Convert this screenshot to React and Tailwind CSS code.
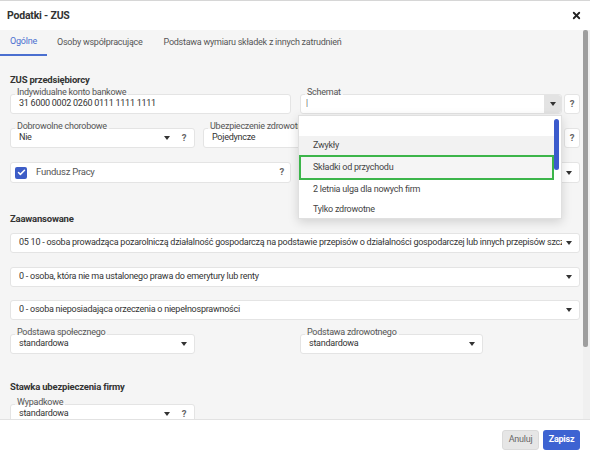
import { X, Check } from 'lucide-react'

function Arrow({ className = '' }) {
  return <span className={`inline-block shrink-0 w-0 h-0 border-l-[3px] border-r-[3px] border-t-[4px] border-l-transparent border-r-transparent border-t-[#333] ${className}`} />
}

function Label({ children }) {
  return (
    <span className="absolute left-[4px] -top-[9px] px-[2px] whitespace-nowrap text-[9px] leading-[12px] text-[#555] bg-[linear-gradient(to_bottom,#f5f5f5_75%,#ffffff_75%)]">
      {children}
    </span>
  )
}

function Box({ label, children, className = '' }) {
  return (
    <div className={`relative h-[20px] bg-white border border-[#e4e4e4] rounded-[3px] flex items-center ${className}`}>
      {label && <Label>{label}</Label>}
      {children}
    </div>
  )
}

function Help({ className = '' }) {
  return <span className={`text-[9.5px] text-[#666] font-bold ${className}`}>?</span>
}

function Select({ label, value, help, className = '' }) {
  return (
    <Box label={label} className={className}>
      <span className="flex-1 min-w-0 pl-[8px] overflow-hidden whitespace-nowrap">{value}</span>
      <Arrow className="ml-[4px] mr-[7px]" />
      {help && <Help className="w-[14px] mr-[3px] text-center" />}
    </Box>
  )
}

export default function App() {
  return (
    <div className="relative w-[590px] h-[460px] bg-white flex flex-col overflow-hidden border-t border-[#d6d6d6] font-['Roboto',sans-serif] text-[9px] tracking-[-0.25px] text-[#333]">
      {/* Header */}
      <header className="h-[29px] flex items-center justify-between pl-[7px] pr-[8px]">
        <h1 className="text-[10.5px] tracking-[-0.2px] font-bold text-[#333]">Podatki - ZUS</h1>
        <X size={11} strokeWidth={4} className="text-[#222]" />
      </header>

      <div className="flex-1 min-h-0 flex bg-[#f5f5f5]">
        <div className="flex-1 min-w-0 overflow-hidden">
          {/* Tabs */}
          <nav className="h-[26px] flex text-[#555]">
            <div className="w-[47px] flex items-center justify-center text-[#4a6fd0] border-b-2 border-[#4a6fd0]">Ogólne</div>
            <div className="pl-[10px] pr-[11px] flex items-center">Osoby współpracujące</div>
            <div className="px-[10px] flex items-center">Podstawa wymiaru składek z innych zatrudnień</div>
          </nav>

          <div className="pl-[10px] pr-[3px]">
            <h2 className="mt-[17px] text-[9.5px] tracking-[-0.2px] font-bold leading-[14px]">ZUS przedsiębiorcy</h2>

            <div className="mt-[7px] flex">
              <Box label="Indywidualne konto bankowe" className="w-[281px]">
                <span className="pl-[8px]">31 6000 0002 0260 0111 1111 1111</span>
              </Box>
              <Box label="Schemat" className="ml-[9px] w-[262px]">
                <span className="flex-1 pl-[5px] text-[#222] font-light">|</span>
                <div className="w-[17px] h-full bg-[#e3e3e3] flex items-center justify-center rounded-r-[3px]">
                  <Arrow />
                </div>
              </Box>
              <Box className="ml-[2px] w-[16px] justify-center"><Help /></Box>
            </div>

            <div className="mt-[14px] flex">
              <Select label="Dobrowolne chorobowe" value="Nie" help className="w-[185px]" />
              <Select label="Ubezpieczenie zdrowotne" value="Pojedyncze" className="ml-[8px] w-[359px]" />
              <Box className="ml-[2px] w-[16px] justify-center"><Help /></Box>
            </div>

            <div className="mt-[14px] flex">
              <div className="w-[281px] h-[21px] bg-white border border-[#e4e4e4] rounded-[3px] flex items-center">
                <span className="ml-[4px] w-[12px] h-[12px] rounded-[2px] bg-[#3d5dc7] flex items-center justify-center">
                  <Check size={9} strokeWidth={4} className="text-white" />
                </span>
                <span className="ml-[9px] flex-1 text-[9.5px] text-[#555]">Fundusz Pracy</span>
                <Help className="mr-[6px]" />
              </div>
              <Select value="" className="ml-[9px] w-[280px] h-[21px]" />
            </div>

            <h2 className="mt-[29px] text-[9.5px] tracking-[-0.2px] font-bold leading-[14px]">Zaawansowane</h2>

            <Select className="mt-[7px] w-[570px]" value="05 10 - osoba prowadząca pozarolniczą działalność gospodarczą na podstawie przepisów o działalności gospodarczej lub innych przepisów szczególnych" />
            <Select className="mt-[14px] w-[570px]" value="0 - osoba, która nie ma ustalonego prawa do emerytury lub renty" />
            <Select className="mt-[13px] w-[570px]" value="0 - osoba nieposiadająca orzeczenia o niepełnosprawności" />

            <div className="mt-[14px] flex">
              <Select label="Podstawa społecznego" value="standardowa" className="w-[185px]" />
              <Select label="Podstawa zdrowotnego" value="standardowa" className="ml-[105px] w-[183px]" />
            </div>

            <h2 className="mt-[26px] text-[9.5px] tracking-[-0.2px] font-bold leading-[14px]">Stawka ubezpieczenia firmy</h2>

            <Select label="Wypadkowe" value="standardowa" help className="mt-[10px] w-[185px]" />
          </div>
        </div>

        {/* Scrollbar */}
        <div className="w-[7px] bg-[#f0f0f0]">
          <div className="w-[5px] h-[317px] bg-[#9e9e9e] rounded-[2px]" />
        </div>
      </div>

      {/* Footer */}
      <footer className="h-[41px] border-t border-[#e2e2e2] bg-white flex items-center justify-end gap-[4px] pr-[10px]">
        <button className="w-[37px] h-[20px] rounded-[3px] bg-[#e6e6e6] border border-[#dadada] text-[9px] text-[#666]">Anuluj</button>
        <button className="w-[37px] h-[20px] rounded-[3px] bg-[#3d63d2] text-[9px] font-bold text-white">Zapisz</button>
      </footer>

      {/* Open Schemat dropdown */}
      <div className="absolute left-[298px] top-[114px] w-[264px] h-[104px] bg-white border border-[#e0e0e0] shadow-[0_3px_10px_rgba(0,0,0,0.15)] text-[#444]">
        <div className="h-[20px]" />
        <div className="h-[19px] w-[255px] bg-[#f2f2f2] flex items-center pl-[14px]">Zwykły</div>
        <div className="h-[25px] w-[255px] bg-[#f5f5f5] border-2 border-[#3cb54a] flex items-center pl-[12px]">Składki od przychodu</div>
        <div className="h-[20px] flex items-center pl-[14px]">2 letnia ulga dla nowych firm</div>
        <div className="h-[20px] flex items-center pl-[14px]">Tylko zdrowotne</div>
        <div className="absolute right-[2px] top-[3px] w-[5px] h-[51px] rounded-full bg-[#3b5bcc]" />
      </div>
    </div>
  )
}
